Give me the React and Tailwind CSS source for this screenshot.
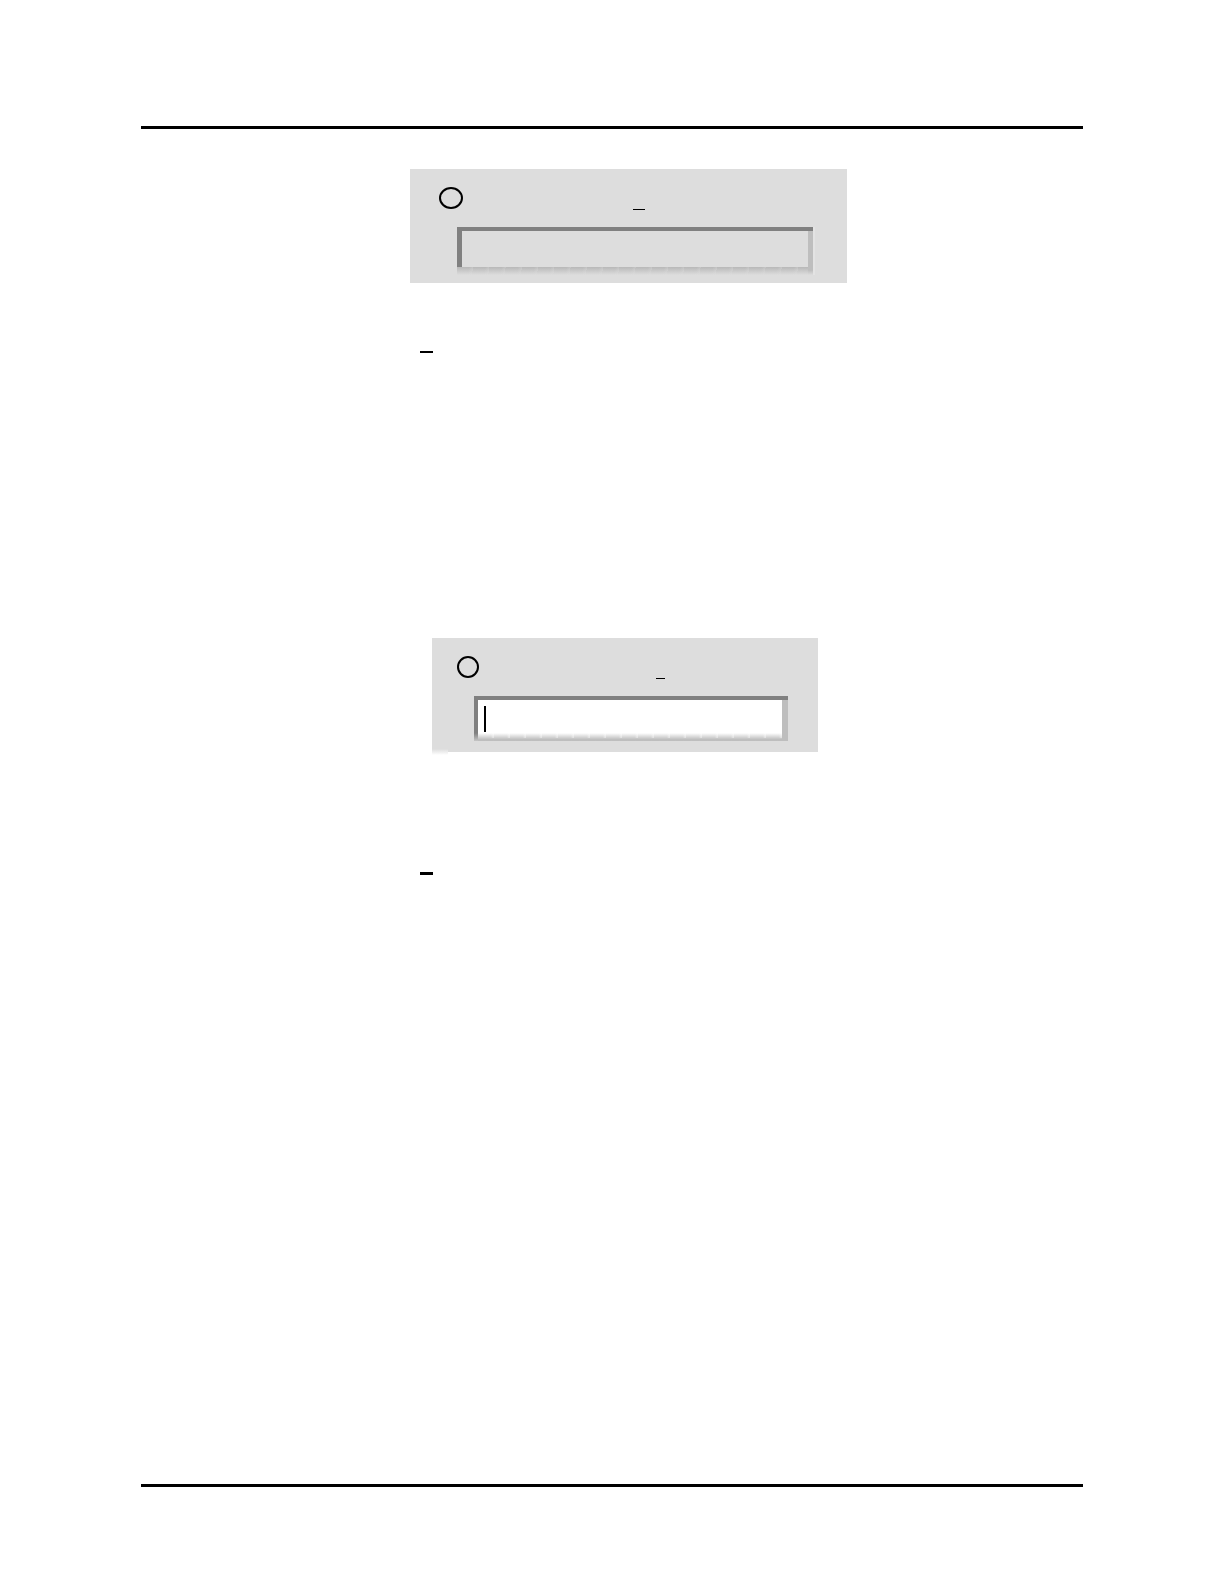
function Mnemonic({ className }) {
  return <span aria-hidden="true" className={`block bg-black ${className}`} />;
}

function LockedPanel() {
  return (
    <section className="ml-[269px] h-[114px] max-w-[437px] bg-[#dddddd] pr-[34px] pl-[29px] pt-[18px]">
      <div className="flex h-10 items-start">
        <input
          type="radio"
          name="locked"
          aria-label="Locked option"
          className="h-[22px] w-6 appearance-none rounded-[50%] border-2 border-black"
        />
        <Mnemonic className="mt-[22px] ml-[170px] h-px w-3" />
      </div>
      <div className="ml-[18px] border-t-4 border-[#808080] shadow-[2px_0_0_#e3e3e3]">
        <input
          type="text"
          readOnly
          aria-label="Locked value"
          className="block h-9 w-full border-r-[5px] border-l-[5px] border-r-[#bebebe] border-l-[#808080] bg-[#dddddd] outline-none"
        />
        <div className="flex h-[8px]">
          <div className="grow bg-linear-to-b from-[#b8b8b8] to-[#dddddd]">
            <div className="h-full bg-[repeating-linear-gradient(100deg,#dddddd00_0px,#dddddd00_12px,#dddddd55_16px)]" />
          </div>
          <div className="w-[5px] bg-linear-to-b from-[#bebebe] from-40% to-[#dddddd]" />
        </div>
      </div>
    </section>
  );
}

function EditablePanel() {
  return (
    <section className="relative ml-[291px] h-[114px] max-w-[386px] bg-[#dddddd] pr-[30px] pl-[25px] pt-[18px]">
      <div className="flex h-10 items-start">
        <input
          type="radio"
          name="editable"
          aria-label="Editable option"
          className="size-[22px] appearance-none rounded-full border-2 border-black"
        />
        <Mnemonic className="mt-[22px] ml-[177px] h-px w-[9px]" />
      </div>
      <div className="relative ml-[17px] border-t-4 border-[#808080]">
        <input
          type="text"
          aria-label="Editable value"
          className="block h-[33px] w-full border-r-[6px] border-l-4 border-r-[#bebebe] border-l-[#808080] bg-white outline-none"
        />
        <span aria-hidden="true" className="absolute top-[6px] left-[10px] h-[26px] w-[2px] bg-black" />
        <div className="flex h-[8px]">
          <div className="w-1 bg-linear-to-b from-[#808080] to-[#c6c6c6]" />
          <div className="grow bg-linear-to-b from-white to-[#bebebe] to-80%">
            <div className="h-[5px] bg-[repeating-linear-gradient(90deg,#ffffff00_0px,#ffffff00_13px,#ffffff66_15px,#ffffff66_16px)]" />
          </div>
          <div className="w-[6px] bg-[#bebebe]" />
        </div>
      </div>
      <div className="absolute -bottom-[3px] left-0 h-[6px] w-4 bg-linear-to-b from-[#dddddd] to-white" />
    </section>
  );
}

export default function App() {
  return (
    <main className="bg-white px-[141px] pt-[126px] pb-[97px]">
      <hr className="mb-10 border-t-[3px] border-black" />
      <LockedPanel />
      <Mnemonic className="mt-[68px] mb-[285px] ml-[279px] h-[2px] w-[13px]" />
      <EditablePanel />
      <Mnemonic className="mt-[120px] ml-[279px] h-[3px] w-[13px]" />
      <hr className="mt-[609px] border-t-[3px] border-black" />
    </main>
  );
}
